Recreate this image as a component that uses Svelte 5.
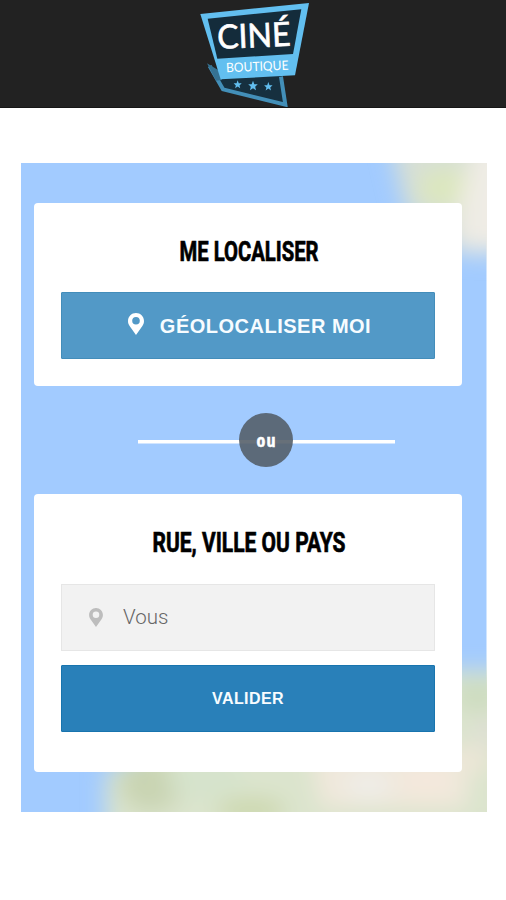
<script>
  let address = '';

  const pin = 'M8 0C3.600 0 0 3.500 0 8c0 2 .6 3.400 1.600 5L8 22l6.400-9c1-1.600 1.600-3 1.600-5 0-4.500-3.600-8-8-8zm0 4a3.800 3.800 0 1 1 0 7.600 3.800 3.800 0 0 1 0-7.600z';
  const star = '0,-12 3,-4 11,-4 5,2 7,10 0,5 -7,10 -5,2 -11,-4 -3,-4';
  const stars = [
    { x: 143, y: 254, size: 1.1 },
    { x: 189, y: 258, size: 1.3 },
    { x: 235, y: 260, size: 1.15 },
  ];
</script>

<header>
  <svg class="logo" viewBox="30 0 330 321" role="img" aria-label="Ciné Boutique">
    <path d="M52 191 L98 272 L293 320 L276 225 L85 235 Z" fill="#16303f" />
    <path d="M59 198 L99 268 L286 314 L273 230" fill="none" stroke="#438fb8" stroke-width="12" />
    <path d="M51 190 L88 212 L96 240 L78 242 Z" fill="#357293" />
    <path d="M31 42 L357 9 L315 226 L92 238 Z" fill="#62bff0" />
    <path d="M53 56 L334 28 L309 162 L82 176 Z" fill="#142c3b" />
    <text class="cine" x="83" y="147" textLength="220" lengthAdjust="spacingAndGlyphs" transform="rotate(-2.500 83 147)">CINÉ</text>
    <text class="boutique" x="109" y="217" textLength="187" lengthAdjust="spacingAndGlyphs" transform="rotate(-2.500 109 217)">BOUTIQUE</text>
    {#each stars as s}
      <polygon points={star} transform="translate({s.x} {s.y}) scale({s.size})" fill="#62bff0" />
    {/each}
  </svg>
</header>

<main>
  <svg class="map" viewBox="0 0 465 650" preserveAspectRatio="none" aria-hidden="true">
    <defs>
      <filter id="soft" x="-30%" y="-30%" width="160%" height="160%">
        <feGaussianBlur stdDeviation="11" />
      </filter>
    </defs>
    <rect width="465" height="650" fill="#a2cbff" />
    <g filter="url(#soft)">
      <path d="M366 -30 H510 V91 H440 L385 50 Z" fill="#d7dfd5" />
      <ellipse cx="426" cy="25" rx="30" ry="20" fill="#dce7bd" />
      <path d="M453 -20 H510 V86 H437 V40 Z" fill="#efece5" />
      <path d="M85 690 V610 L120 590 L400 508 H510 V690 Z" fill="#dbe4cd" />
      <ellipse cx="130" cy="622" rx="32" ry="28" fill="#c9d4b2" />
      <ellipse cx="184" cy="616" rx="38" ry="20" fill="#d5e3cc" />
      <ellipse cx="230" cy="648" rx="35" ry="12" fill="#cbd7ab" />
      <path d="M290 590 H445 V645 H300 Z" fill="#f0e8dc" />
      <ellipse cx="347" cy="623" rx="24" ry="14" fill="#efede8" />
      <ellipse cx="405" cy="620" rx="25" ry="18" fill="#f4e8dc" />
      <ellipse cx="456" cy="533" rx="24" ry="17" fill="#ccdcbf" />
      <ellipse cx="464" cy="570" rx="15" ry="16" fill="#dedfd4" />
      <ellipse cx="450" cy="597" rx="18" ry="14" fill="#ede6d7" />
    </g>
  </svg>

  <section class="card">
    <h2>
      <svg width="150" height="40" viewBox="0 0 150 40">
        <text x="5.500" y="29.500" textLength="139" lengthAdjust="spacingAndGlyphs">ME LOCALISER</text>
      </svg>
    </h2>
    <button class="locate">
      <svg class="pin" viewBox="0 0 16 22"><path d={pin} /></svg>
      <span>GÉOLOCALISER MOI</span>
    </button>
  </section>

  <div class="separator">
    <span class="circle">
      <svg width="30" height="26" viewBox="0 0 30 26">
        <text x="5.500" y="20" textLength="19" lengthAdjust="spacing">ou</text>
      </svg>
    </span>
  </div>

  <section class="card search">
    <h2>
      <svg width="204" height="40" viewBox="0 0 204 40">
        <text x="5.500" y="29.500" textLength="193" lengthAdjust="spacingAndGlyphs">RUE, VILLE OU PAYS</text>
      </svg>
    </h2>
    <label class="field">
      <svg class="pin" viewBox="0 0 16 22"><path d={pin} /></svg>
      <input type="text" placeholder="Vous" bind:value={address} />
    </label>
    <button class="submit">VALIDER</button>
  </section>
</main>

<style>
  :global(body) {
    background: #fff;
    font-family: "Liberation Sans", Arial, sans-serif;
  }

  header {
    box-sizing: border-box;
    height: 107.500px;
    background: #222;
    border-bottom: 1px solid #161616;
    display: flex;
    padding-left: 200px;
  }

  .logo {
    width: 110px;
    height: 107px;
    flex: none;
  }

  .cine {
    font: 400 100px Lato, sans-serif;
    fill: #fff;
    stroke: #fff;
    stroke-width: 2;
  }

  .boutique {
    font: 400 39px Lato, sans-serif;
    fill: #fff;
  }

  main {
    position: relative;
    box-sizing: border-box;
    width: 465.500px;
    height: 649.500px;
    margin: 55px 0 0 21px;
    padding: 40px 24.500px 0 13px;
    overflow: hidden;
  }

  .map {
    position: absolute;
    inset: 0;
    width: 100%;
    height: 100%;
    z-index: -1;
  }

  .card {
    box-sizing: border-box;
    height: 183.500px;
    padding: 28px 27px 0;
    background: #fff;
    border-radius: 4px;
  }

  .search {
    height: 278px;
  }

  h2 {
    display: flex;
    justify-content: center;
    height: 40px;
    margin: 0 0 21.500px;
    padding-left: 2px;
  }

  h2 svg {
    overflow: visible;
  }

  h2 text {
    font: 700 28.500px Roboto, sans-serif;
    fill: #000;
    stroke: #000;
    stroke-width: 0.700;
  }

  button {
    display: flex;
    align-items: center;
    justify-content: center;
    box-sizing: border-box;
    width: 100%;
    height: 67px;
    padding: 0;
    border-radius: 1px;
    color: #f7fcff;
    font-family: inherit;
    font-weight: bold;
  }

  .locate {
    gap: 16px;
    padding: 2px 0 0 3px;
    background: #5299c7;
    border: 1px solid #438dba;
    font-size: 20px;
    letter-spacing: 0.500px;
  }

  .locate .pin {
    width: 16px;
    height: 22px;
    fill: #fff;
    margin-top: -5px;
  }

  .submit {
    margin-top: 14px;
    padding-top: 1px;
    background: #2980b9;
    border: 1px solid #1874ae;
    font-size: 16px;
    letter-spacing: 0.400px;
  }

  .separator {
    display: flex;
    align-items: center;
    justify-content: center;
    height: 108px;
    padding-left: 36px;
    background: linear-gradient(#fff, #fff) 104px 54px / 257px 3.500px no-repeat;
  }

  .circle {
    display: flex;
    align-items: center;
    justify-content: center;
    width: 54px;
    height: 54px;
    border-radius: 50%;
    background: rgba(82, 92, 102, 0.880);
  }

  .circle text {
    font: 700 18px "Open Sans", sans-serif;
    font-stretch: 75%;
    fill: #fff;
    stroke: #fff;
    stroke-width: 0.500;
  }

  .field {
    display: flex;
    align-items: center;
    gap: 20px;
    box-sizing: border-box;
    height: 67px;
    padding: 0 27px;
    background: #f2f2f2;
    border: 1px solid #e6e6e6;
  }

  .field .pin {
    flex: none;
    width: 14px;
    height: 19px;
    fill: #bdbdbd;
  }

  input {
    flex: 1;
    min-width: 0;
    padding: 0;
    border: 0;
    outline: 0;
    background: none;
    font: 300 20.500px Roboto, sans-serif;
  }

  input::placeholder {
    color: #666;
    opacity: 1;
  }
</style>
